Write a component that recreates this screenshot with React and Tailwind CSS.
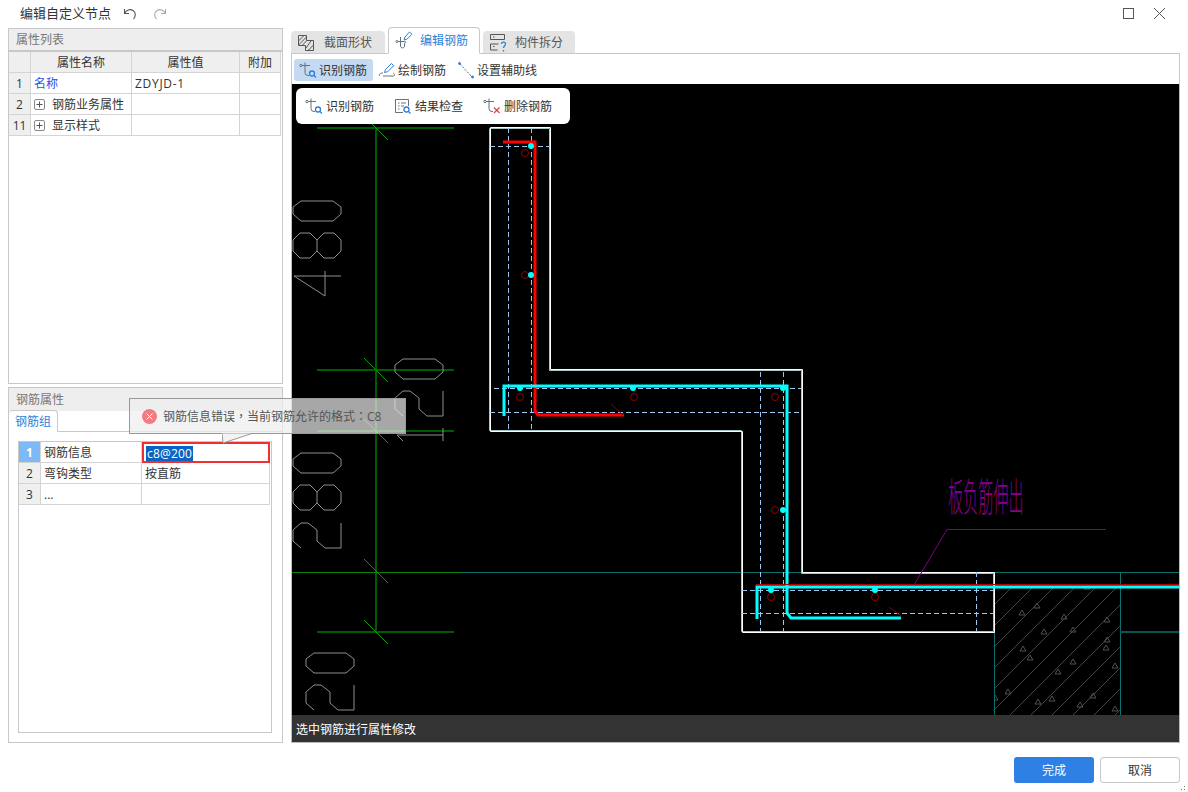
import { Fragment } from "react";

const FONT = "font-['Open_Sans','Noto_Sans_CJK_SC',sans-serif]";
const CELL = "border-r border-b border-[#d4d4d4] flex items-center pt-px";
const INDEX = "bg-[#efefef] border-r border-b border-[#d4d4d4] flex items-center justify-center pt-px";

/* ---------- Small icons ---------- */
const RebarIcon = ({ badge }) => (
  <svg width="18" height="18" viewBox="0 0 18 18" fill="none" stroke="#66717c" strokeWidth="1" className="shrink-0">
    <path d="M3 4.500h8M6 1.500v10a3 3 0 0 0 3 3h1" />
    <circle cx="2" cy="4.500" r="1.200" />
    {badge === "search" && (
      <g stroke="#2f7fd8" strokeWidth="1.300">
        <circle cx="13" cy="12.500" r="2.500" />
        <path d="M15 14.500l2 2" />
      </g>
    )}
    {badge === "delete" && <path d="M11 10.500l5.500 5.500M16.500 10.500l-5.500 5.500" stroke="#e04040" strokeWidth="1.200" />}
  </svg>
);

const PenIcon = () => (
  <svg width="18" height="18" viewBox="0 0 18 18" fill="none" stroke="#66717c" strokeWidth="1" className="shrink-0">
    <path d="M2 15c-2-2 1-3 3-3M5 15h10c2 0 2-2 0-3" />
    <path d="M6.500 11.500l1-3 6-6 2.200 2.200-6 6z" stroke="#2f7fd8" />
  </svg>
);

const GuideIcon = () => (
  <svg width="18" height="18" viewBox="0 0 18 18" fill="none" stroke="#66717c" strokeWidth="1" className="shrink-0">
    <path d="M3 3l12 13" strokeDasharray="2 1.500" />
    <circle cx="2.500" cy="2.500" r="1" fill="#2f7fd8" stroke="#2f7fd8" />
    <circle cx="15.500" cy="16" r="1" fill="#2f7fd8" stroke="#2f7fd8" />
  </svg>
);

const CheckIcon = () => (
  <svg width="18" height="18" viewBox="0 0 18 18" fill="none" stroke="#66717c" strokeWidth="1" className="shrink-0">
    <path d="M9 15.500H1.500v-13h13V9" />
    <path d="M4 6h1.500M7 6h5M4 9h1.500M7 9h3M4 12h1.500" />
    <g stroke="#2f7fd8" strokeWidth="1.300">
      <circle cx="12.500" cy="12.500" r="2.500" />
      <path d="M14.500 14.500l2 2" />
    </g>
  </svg>
);

const SectionIcon = () => (
  <svg width="18" height="18" viewBox="0 0 18 18" fill="none" stroke="#555" strokeWidth="1" className="shrink-0">
    <path d="M1.500 1.500h8v5h7v10h-8v-5h-7z" />
    <path d="M1.500 7l5.500-5.500M1.500 11l8-8M5 11.500l4.500-4.500M9 14l5-7M11 16.500l5.500-5.500" />
  </svg>
);

const EditRebarIcon = () => (
  <svg width="20" height="20" viewBox="0 0 20 20" fill="none" stroke="#66717c" strokeWidth="1" className="shrink-0">
    <path d="M3 10.500h6c2 0 2.500 1 1 1.500M5.500 6v9c0 2.500 4 2.500 4 0v-3" />
    <circle cx="2" cy="10.500" r="1" />
    <path d="M9 9l1-3 4.500-5 2.500 2.200-5 5z" stroke="#2f7fd8" />
  </svg>
);

const SplitIcon = () => (
  <svg width="20" height="20" viewBox="0 0 20 20" fill="none" stroke="#555" strokeWidth="1" className="shrink-0">
    <path d="M1.500 1.500h14v5h-14zM1.500 11h8M1.500 11v6h7" />
    <path d="M4 4h1.500M4 13.500h1.500" />
    <path d="M12.500 11c0-2.500 4-2.500 4 0 0 2-2 2-2 4M14.500 17v1.500" stroke="#2f7fd8" strokeWidth="1.300" />
  </svg>
);

const PlusBox = () => (
  <span className="w-[11px] h-[11px] mr-[7px] -mt-px rounded-[2px] border border-[#888] flex items-center justify-center shrink-0">
    <svg width="7" height="7" viewBox="0 0 7 7" stroke="#555" strokeWidth="1"><path d="M3.500 0.500v6M0.500 3.500h6" /></svg>
  </span>
);

/* ---------- Drawing parts: rotated CAD digits ---------- */
const zeroPath = (x, y) =>
  `M${x + 8} ${y}H${x + 40}L${x + 48} ${y + 6}V${y + 13}L${x + 40} ${y + 20}H${x + 8}L${x} ${y + 13}V${y + 6}Z`;

const eightPath = (x, y) =>
  `M${x + 7} ${y}H${x + 17}L${x + 24} ${y + 7}L${x + 31} ${y}H${x + 41}L${x + 48} ${y + 7}V${y + 18}L${x + 41} ${y + 25}H${x + 31}L${x + 24} ${y + 18}L${x + 17} ${y + 25}H${x + 7}L${x} ${y + 18}V${y + 7}Z M${x + 24} ${y + 7}V${y + 18}`;

const twoPath = (x, y) =>
  `M${x + 48} ${y}V${y + 25}H${x + 32}L${x + 24} ${y + 18}V${y + 7}L${x + 15} ${y}H${x + 8}L${x} ${y + 7}V${y + 18}L${x + 8} ${y + 25}`;

const DIGITS = [
  zeroPath(293, 201),
  eightPath(293, 233),
  "M294 276H341M294 276L325 296V271",
  zeroPath(395, 359),
  twoPath(395, 391),
  "M397 435H443M443 428V441M397 435L403 441",
  zeroPath(293, 453),
  eightPath(293, 485),
  twoPath(293, 523),
  zeroPath(306, 653),
  twoPath(306, 685),
];

const DIM_LINES = [128, 370, 431, 632];
const TICKS = [128, 370, 431, 571, 632];
const HATCH = [1012, 1033, 1054, 1075, 1096, 1117, 1138, 1159, 1180, 1201, 1222, 1243, 1264, 1285, 1306];
const MARKS = [
  [1087, 587], [1037, 606], [1022, 613], [1064, 617], [1044, 632], [1073, 630], [1107, 620],
  [1023, 649], [1030, 658], [1107, 640], [1073, 662], [1106, 648], [1058, 672], [1115, 666],
  [1008, 692], [995, 698], [1038, 702], [1052, 699], [1093, 696], [1080, 705], [1115, 709],
];
const DOTS = [[531, 146], [531, 275], [520, 388], [633, 388], [783, 388], [783, 510], [771, 590], [875, 590]];
const RINGS = [[525, 153], [525, 275], [520, 397], [634, 397], [775, 397], [775, 510], [771, 597], [875, 597]];
// outline of the slab, drawn twice on the pixel grid: a white line with a grey one beside it
const WALL = "M490.5 127.5H550.5V369.5H802.5V572.5H994.5V632.5H742.5V431.5H490.5Z";
const WALL_SHADOW = "M489.5 128.5H549.5V370.5H801.5V573.5H993.5V631.5H741.5V430.5H489.5Z";

const Drawing = () => (
  <svg className="block w-[887px] h-[631px] shrink-0" viewBox="292 84 887 631" fill="none" shapeRendering="crispEdges">
    <defs>
      <clipPath id="hatchClip"><rect x="994" y="587" width="126" height="128" /></clipPath>
    </defs>
    {/* dimension lines */}
    <path d="M376 128V632" stroke="#005a00" strokeWidth="2" />
    {DIM_LINES.map((y) => (
      <path key={y} d={`M317 ${y}H454`} stroke="#005a00" strokeWidth="2" />
    ))}
    <path d="M292 572H462" stroke="#0a800a" />
    <path d="M462 572H1179" stroke="#0d6e6e" />
    {TICKS.map((y) => (
      <path key={y} d={`M364 ${y - 12}L388 ${y + 12}`} stroke="#0a9a0a" shapeRendering="auto" />
    ))}
    <g stroke="#8f8f8f" shapeRendering="auto">
      {DIGITS.map((d) => <path key={d} d={d} />)}
    </g>

    {/* concrete hatch */}
    <g clipPath="url(#hatchClip)" shapeRendering="auto">
      {HATCH.map((x) => (
        <path key={x} d={`M${x} 587L${x - 200} 787`} stroke="#444444" />
      ))}
      {MARKS.map(([x, y]) => (
        <path key={`${x}-${y}`} d={`M${x} ${y - 3}l3 5h-6z`} stroke="#505050" />
      ))}
    </g>
    <path d="M994 572V715M1120 572V715" stroke="#0d6e6e" />
    <path d="M1120 632H1179" stroke="#0b5555" strokeWidth="2" />

    {/* slab outline */}
    <path d={WALL_SHADOW} stroke="#a6c6c6" shapeRendering="auto" />
    <path d={WALL} stroke="#ffffff" shapeRendering="auto" />

    {/* axis dashes */}
    <g stroke="#9fc6ee" strokeDasharray="5 3">
      <path d="M508 128V431M531 128V431M490 146H550M494 388H802M490 412H800" />
      <path d="M760 372V632M783 372V632M976 572V632M742 590H994M742 613H994" />
    </g>

    {/* rebars */}
    <path d="M503 142H535V411L538 415H624" stroke="#ff0000" strokeWidth="3" shapeRendering="auto" />
    <path d="M611 404L623 415" stroke="#800000" shapeRendering="auto" />
    <path d="M504 416V386H787V613L791 618H901" stroke="#00ffff" strokeWidth="3" shapeRendering="auto" />
    <path d="M757 619V587H1179" stroke="#00ffff" strokeWidth="3" shapeRendering="auto" />
    <path d="M756 584H1179" stroke="#b00000" />
    <path d="M889 607L901 616" stroke="#800000" shapeRendering="auto" />
    {RINGS.map(([x, y]) => (
      <circle key={`${x}-${y}`} cx={x} cy={y} r="3.500" stroke="#900000" shapeRendering="auto" />
    ))}
    {DOTS.map(([x, y]) => (
      <circle key={`${x}-${y}`} cx={x} cy={y} r="3" fill="#00ffff" shapeRendering="auto" />
    ))}

    {/* annotation */}
    <path d="M914 585L947 529.500H1106" stroke="#800080" shapeRendering="auto" />
    <text
      transform="translate(948 511) scale(0.63 1.6)"
      fontSize="24"
      fill="#8a008a"
      fontFamily="'Noto Sans CJK SC', sans-serif"
      fontWeight="300"
    >
      板负筋伸出
    </text>
  </svg>
);

/* ---------- Left tables ---------- */
const PROP_ROWS = [
  { no: "1", name: "名称", value: "ZDYJD-1", link: true },
  { no: "2", name: "钢筋业务属性", plus: true },
  { no: "11", name: "显示样式", plus: true },
];

const PropertyTable = () => (
  <div className="grid grid-cols-[22px_101px_108px_41px] auto-rows-[21px] text-xs text-[#333]">
    <div className={INDEX} />
    {["属性名称", "属性值", "附加"].map((t) => (
      <div key={t} className={INDEX}>{t}</div>
    ))}
    {PROP_ROWS.map((r) => (
      <Fragment key={r.no}>
        <div className={INDEX}>{r.no}</div>
        <div className={`${CELL} pl-[3px] ${r.link ? "text-[#2b50e8]" : ""}`}>
          {r.plus && <PlusBox />}
          {r.name}
        </div>
        <div className={`${CELL} pl-[3px] tracking-[0.7px]`}>{r.value}</div>
        <div className={CELL} />
      </Fragment>
    ))}
  </div>
);

const RebarTable = () => (
  <div className="grid grid-cols-[22px_101px_128px] auto-rows-[21px] text-xs text-[#333]">
    <div className="bg-[#7db8f7] text-white font-bold border-r border-b border-[#d4d4d4] flex items-center justify-center pt-px">1</div>
    <div className={`${CELL} pl-[3px]`}>钢筋信息</div>
    <div className="border-2 border-[#f03030] flex items-center pl-[2px] pt-px">
      <span className="bg-[#0a64c2] text-white leading-[15px] px-px tracking-[0.2px]">c8@200</span>
    </div>
    <div className={INDEX}>2</div>
    <div className={`${CELL} pl-[3px]`}>弯钩类型</div>
    <div className={`${CELL} pl-[3px]`}>按直筋</div>
    <div className={INDEX}>3</div>
    <div className={`${CELL} pl-[3px]`}>...</div>
    <div className={CELL} />
  </div>
);

const ErrorTip = () => (
  <div className="absolute left-[120px] top-[10px] w-[277px] h-[36px] z-10 bg-[#eeeeee]/70 border border-[#999] flex items-center pl-[12px] text-xs text-[#555]">
    <span className="w-[15px] h-[15px] mr-[6px] rounded-full bg-[#f27b7f] flex items-center justify-center shrink-0">
      <svg width="7" height="7" viewBox="0 0 7 7" stroke="#fff" strokeWidth="1"><path d="M0.500 0.500l6 6M6.500 0.500l-6 6" /></svg>
    </span>
    <span className="pt-px">
      钢筋信息错误<span className="font-['Noto_Sans_CJK_TC']">，</span>当前钢筋允许的格式<span className="font-['Noto_Sans_CJK_TC']">：</span>C8
    </span>
    <svg className="absolute left-[92px] top-[34px]" width="36" height="12" viewBox="0 0 36 12" fill="none">
      <path d="M0 0.500L1 10L30 0.500" fill="#f3f3f3" stroke="#999" />
    </svg>
  </div>
);

/* ---------- Tabs and tool buttons ---------- */
const TABS = [
  { label: "截面形状", icon: <SectionIcon />, box: "w-[94px] pl-[6px] gap-[9px]" },
  { label: "编辑钢筋", icon: <EditRebarIcon />, box: "w-[92px] pl-[6px] gap-[5px]", active: true },
  { label: "构件拆分", icon: <SplitIcon />, box: "w-[92px] pl-[6px] gap-[6px]" },
];

const ToolButton = ({ icon, label, active }) => (
  <div className={`h-[22px] pl-[5px] pr-[6px] rounded-[3px] flex items-center gap-[2px] ${active ? "bg-[#c3daf2]" : ""}`}>
    {icon}
    <span className="pt-px">{label}</span>
  </div>
);

export default function App() {
  return (
    <div className={`w-[1188px] h-[792px] bg-white flex flex-col overflow-hidden relative ${FONT}`}>
      {/* Title bar */}
      <div className="h-[27px] shrink-0 flex items-center pl-[20px] pr-[22px] text-[13px] text-[#333]">
        <span>编辑自定义节点</span>
        <svg className="ml-[11px]" width="16" height="16" viewBox="0 0 16 16" fill="none" stroke="#555" strokeWidth="1.100">
          <path d="M2.500 3v4.500H7M2.500 7.500C4 4 8 2.500 11 4.500c3 2 3 6 .5 8.500" />
        </svg>
        <svg className="ml-[14px]" width="16" height="16" viewBox="0 0 16 16" fill="none" stroke="#aaa" strokeWidth="1.100">
          <path d="M13.500 3v4.500H9M13.500 7.500C12 4 8 2.500 5 4.500c-3 2-3 6-.5 8.500" />
        </svg>
        <div className="ml-auto flex items-center gap-[19px]">
          <span className="w-[11px] h-[11px] border border-[#555]" />
          <svg width="13" height="13" viewBox="0 0 13 13" stroke="#555" strokeWidth="1"><path d="M1 1l11 11M12 1L1 12" /></svg>
        </div>
      </div>

      {/* Main */}
      <div className="h-[716px] shrink-0 flex pl-[8px] pr-[8px] text-xs">
        {/* Left column */}
        <div className="w-[275px] shrink-0 flex flex-col gap-[3px] mt-px">
          <div className="h-[356px] border border-[#c8c8c8]">
            <div className="h-[23px] bg-[#eeeeee] border-b-2 border-[#c8c8c8] flex items-center pl-[7px] text-[#777]">属性列表</div>
            <PropertyTable />
          </div>
          <div className="relative flex-1 border border-[#c8c8c8]">
            <div className="h-[23px] bg-[#eeeeee] flex items-center pl-[7px] text-[#777]">钢筋属性</div>
            <ErrorTip />
            <div className="h-[21px] border-b border-[#c8c8c8] flex items-end">
              <div className="h-[22px] w-[49px] -mb-px border border-[#c8c8c8] border-b-white border-l-0 rounded-t-[4px] bg-white flex items-center justify-center pt-px text-[#2f7fd8]">钢筋组</div>
            </div>
            <div className="ml-[9px] mr-[10px] mt-[9px] h-[292px] border border-[#c8c8c8]">
              <RebarTable />
            </div>
          </div>
        </div>

        {/* Right column */}
        <div className="w-[889px] ml-[8px] shrink-0 flex flex-col text-[#333]">
          <div className="h-[27px] flex items-end gap-[3px] border-b border-[#c8c8c8] shrink-0">
            {TABS.map((t) => (
              <div
                key={t.label}
                className={`${t.box} rounded-t-[4px] flex items-center pt-px ${
                  t.active
                    ? "h-[27px] -mb-px bg-white border border-[#c8c8c8] border-b-white text-[#2f7fd8]"
                    : "h-[22px] bg-[#e4e4e4] text-[#555]"
                }`}
              >
                {t.icon}
                <span>{t.label}</span>
              </div>
            ))}
          </div>
          <div className="h-[30px] border-x border-[#c8c8c8] flex items-center pl-[2px] pt-[2px] shrink-0">
            <ToolButton active icon={<RebarIcon badge="search" />} label="识别钢筋" />
            <ToolButton icon={<PenIcon />} label="绘制钢筋" />
            <ToolButton icon={<GuideIcon />} label="设置辅助线" />
          </div>
          <div className="relative flex-1 min-h-0 flex flex-col border-r border-b border-l border-[#bbbbbb] bg-black">
            <Drawing />
            {/* Floating toolbar over the canvas */}
            <div className="absolute left-[4px] top-[4px] w-[274px] h-[36px] bg-white rounded-[6px] flex items-center pl-[9px] gap-[20px]">
              <div className="flex items-center gap-[3px]"><RebarIcon badge="search" /><span className="pt-px">识别钢筋</span></div>
              <div className="flex items-center gap-[3px]"><CheckIcon /><span className="pt-px">结果检查</span></div>
              <div className="flex items-center gap-[3px]"><RebarIcon badge="delete" /><span className="pt-px">删除钢筋</span></div>
            </div>
            <div className="flex-1 bg-[#333333] text-white flex items-center pl-[4px] pt-[2px]">选中钢筋进行属性修改</div>
          </div>
        </div>
      </div>

      {/* Footer */}
      <div className="flex-1 flex justify-end gap-[6px] pr-[8px] pt-[14px] text-xs">
        <button className="w-[80px] h-[26px] pt-px rounded-[3px] bg-[#2f80e4] text-white">完成</button>
        <button className="w-[80px] h-[26px] pt-px rounded-[3px] bg-white border border-[#c8c8c8] text-[#333]">取消</button>
      </div>

      {/* Resize grip */}
      <svg className="absolute right-[2px] bottom-px" width="5" height="5" viewBox="0 0 5 5" fill="#777">
        <rect x="3" y="0" width="1" height="1" />
        <rect x="3" y="3" width="1" height="1" />
        <rect x="0" y="3" width="1" height="1" />
      </svg>
    </div>
  );
}
